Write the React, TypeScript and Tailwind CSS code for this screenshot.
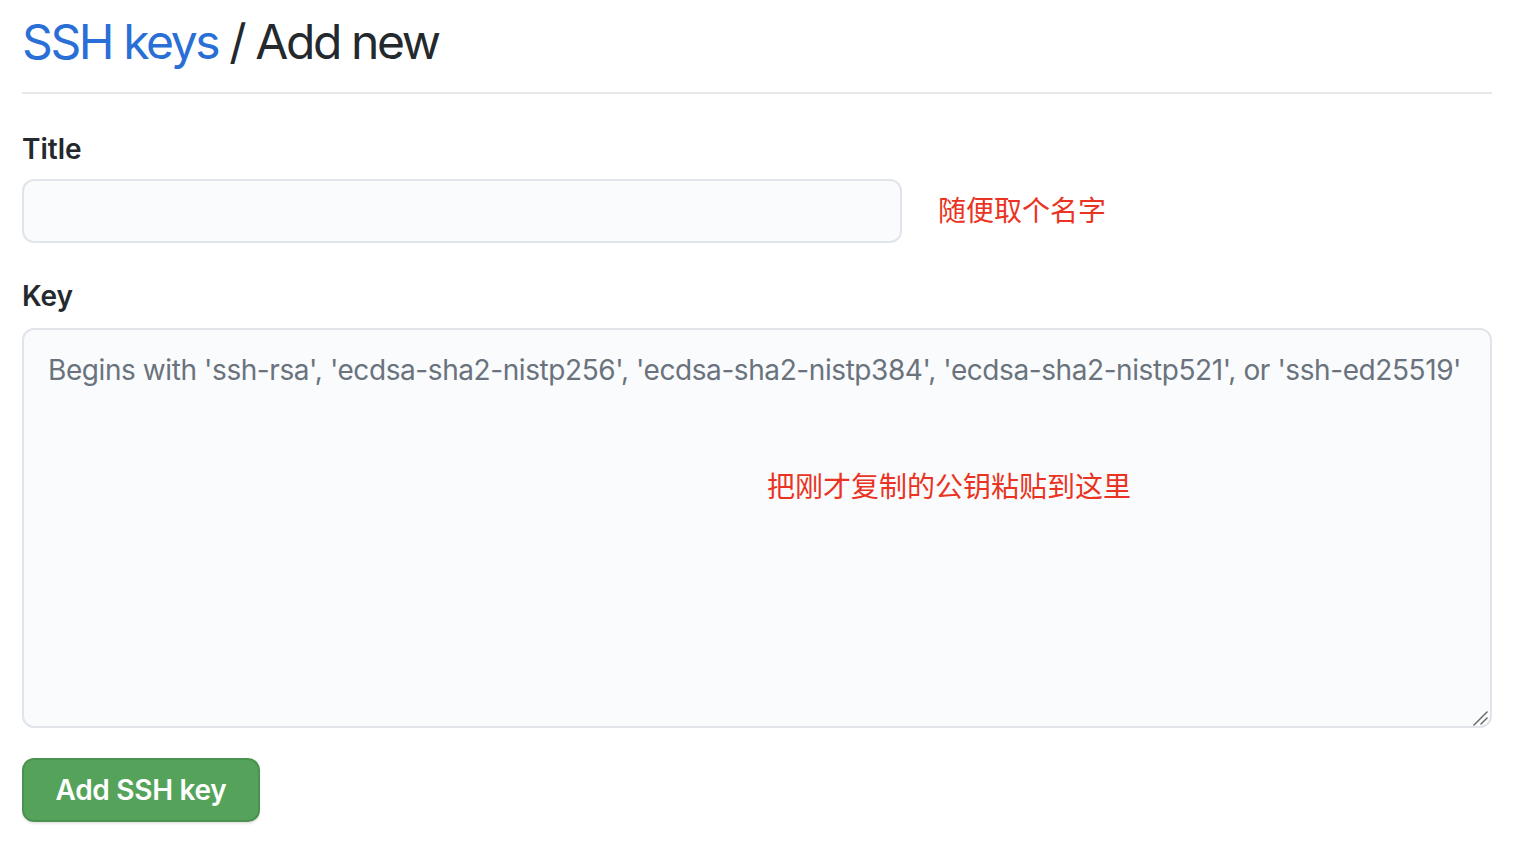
import { useState } from 'react';

const FONT = '[font-family:Inter,"Noto_Sans_CJK_SC",sans-serif]';

export default function App() {
  const [title, setTitle] = useState('');
  const [key, setKey] = useState('');

  return (
    <div className={`${FONT} min-h-screen bg-white pl-[22px] pr-[28px] text-[#24292e]`}>
      {/* Subhead */}
      <div className="border-b-2 border-[#e6e8ec] pt-[12px] pb-[20px]">
        <h2 className="text-[48px] font-normal leading-[60px] tracking-[-0.05em]">
          <a href="#" className="text-[#2a6fd6]">SSH keys</a> / Add new
        </h2>
      </div>

      <form onSubmit={(e) => e.preventDefault()}>
        {/* Title */}
        <div className="mt-[35px]">
          <label className="block text-[28px] font-semibold leading-[40px]">Title</label>
          <div className="mt-[10px] flex items-center gap-[36px]">
            <input
              type="text"
              value={title}
              onChange={(e) => setTitle(e.target.value)}
              className="h-[64px] w-[880px] rounded-[12px] border-2 border-[#e1e4e8] bg-[#fafbfc] px-[24px] text-[28px] outline-none"
            />
            <span className="text-[28px] leading-[40px] text-[#ea3323]">随便取个名字</span>
          </div>
        </div>

        {/* Key */}
        <div className="mt-[33px]">
          <label className="block text-[28px] font-semibold leading-[40px]">Key</label>
          <div className="relative mt-[12px]">
            <textarea
              value={key}
              onChange={(e) => setKey(e.target.value)}
              placeholder="Begins with 'ssh-rsa', 'ecdsa-sha2-nistp256', 'ecdsa-sha2-nistp384', 'ecdsa-sha2-nistp521', or 'ssh-ed25519'"
              className="block h-[400px] w-full resize-none rounded-[12px] border-2 border-[#e1e4e8] bg-[#fafbfc] pl-[24px] pr-[8px] py-[18px] text-[28px] leading-[44px] tracking-[-0.015em] outline-none placeholder:text-[#6a737d]"
            />
            <span className="pointer-events-none absolute left-[745px] top-[139px] text-[28px] leading-[40px] text-[#ea3323]">
              把刚才复制的公钥粘贴到这里
            </span>
            {/* resize grip */}
            <svg
              className="pointer-events-none absolute bottom-[2px] right-[2px]"
              width="20"
              height="20"
              viewBox="0 0 20 20"
              fill="none"
              stroke="#666"
              strokeWidth="1.5"
              strokeLinecap="round"
            >
              <path d="M17 6 L4 19" />
              <path d="M17 12 L11 18" />
            </svg>
          </div>
        </div>

        <button
          type="submit"
          className="mt-[30px] h-[64px] w-[238px] rounded-[12px] border-2 border-[#4b9250] bg-[#55a35a] text-[28px] font-semibold tracking-[-0.01em] text-white shadow-[0_2px_2px_rgba(27,31,35,0.1)]"
        >
          Add SSH key
        </button>
      </form>
    </div>
  );
}
